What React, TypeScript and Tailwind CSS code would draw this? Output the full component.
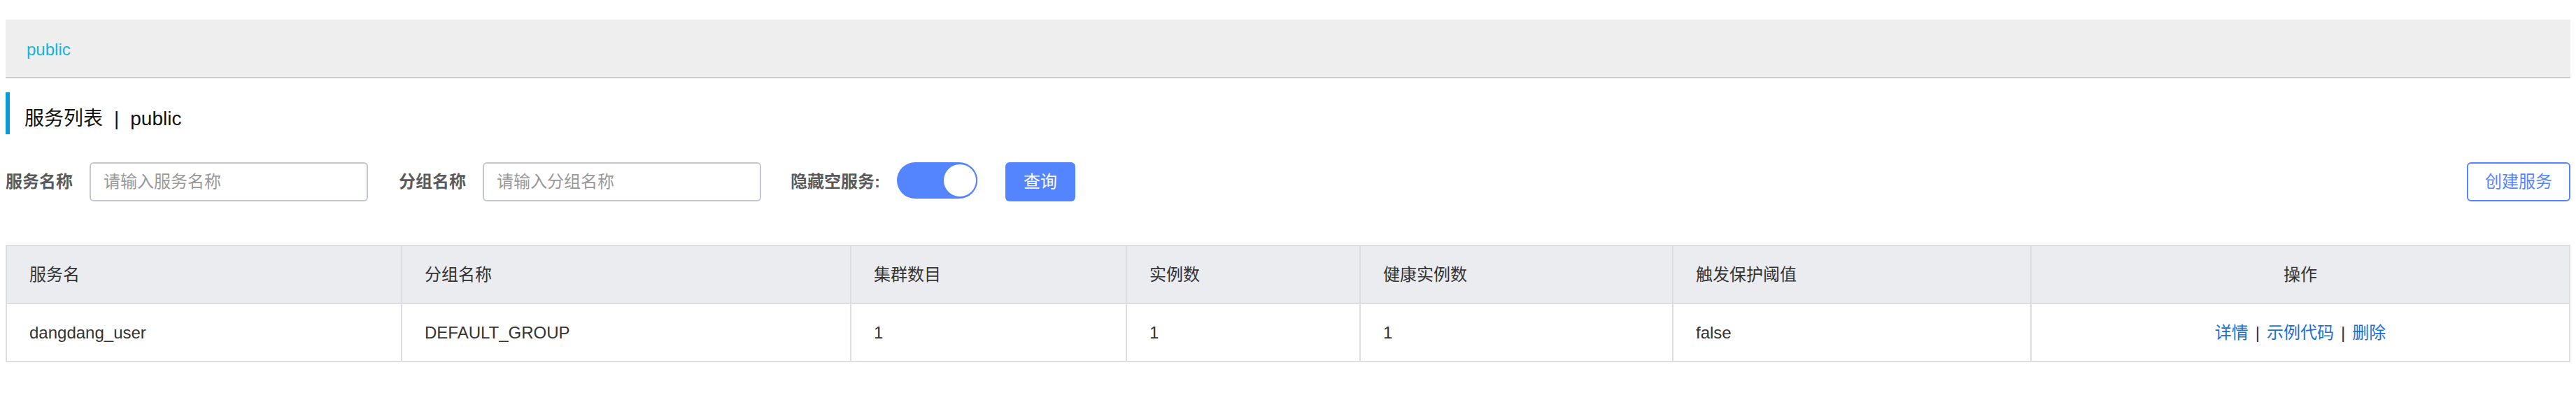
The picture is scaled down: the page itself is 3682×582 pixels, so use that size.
export default function App() {
  const grid =
    "grid grid-cols-[563px_642px_394px_334px_447px_512px_1fr]";
  const cell = "flex items-center px-[32px] border-l-2 border-[#dcdee3]";
  return (
    <div className="w-[3682px] h-[582px] bg-white pt-[28px] font-['Liberation_Sans','Noto_Sans_CJK_SC',sans-serif] text-[24px] text-[#333]">
      {/* namespace band */}
      <div className="mx-[8px] h-[84px] bg-[#eeeeee] border-b-2 border-[#cccccc] flex items-center pl-[30px] pt-[4px]">
        <span className="text-[#16b3d9] text-[24px] leading-[28px]">public</span>
      </div>

      {/* title */}
      <div className="mx-[8px] mt-[20px] h-[60px] border-l-[6px] border-[#0b9bd4] flex items-center pl-[21px] pt-[16px]">
        <span className="text-[28px] leading-[32px] text-[#111]">服务列表</span>
        <span className="text-[28px] leading-[32px] text-[#111] mx-[16px]">|</span>
        <span className="text-[28px] leading-[32px] text-[#111]">public</span>
      </div>

      {/* filter row */}
      <div className="mt-[40px] h-[56px] px-[8px] flex items-center">
        <span className="font-bold text-[#5a5a5a] mr-[24px] leading-[28px]">服务名称</span>
        <input
          readOnly
          placeholder="请输入服务名称"
          className="w-[398px] h-[56px] border-2 border-[#c4c6cf] rounded-[6px] pl-[18px] text-[24px] placeholder:text-[#999] outline-none"
        />
        <span className="ml-[44px] font-bold text-[#5a5a5a] mr-[24px] leading-[28px]">分组名称</span>
        <input
          readOnly
          placeholder="请输入分组名称"
          className="w-[398px] h-[56px] border-2 border-[#c4c6cf] rounded-[6px] pl-[18px] text-[24px] placeholder:text-[#999] outline-none"
        />
        <span className="ml-[42px] font-bold text-[#5a5a5a] mr-[24px] leading-[28px]">隐藏空服务:</span>
        <div className="relative w-[115px] h-[52px] rounded-full bg-[#5584ff] -mt-[4px]">
          <div className="absolute right-0 top-[1px] w-[50px] h-[50px] rounded-full bg-white border-2 border-[#5584ff]" />
        </div>
        <button className="ml-[40px] w-[100px] h-[56px] rounded-[6px] bg-[#5584ff] text-white text-[24px]">
          查询
        </button>
        <button className="ml-auto w-[148px] h-[56px] rounded-[6px] border-2 border-[#5584ff] bg-white text-[#5584ff] text-[24px]">
          创建服务
        </button>
      </div>

      {/* table */}
      <div className="mx-[8px] mt-[62px] border-2 border-[#dcdee3]">
        <div className={`${grid} h-[83px] bg-[#ebecf0] border-b-2 border-[#dcdee3]`}>
          <div className="flex items-center px-[32px]">服务名</div>
          <div className={cell}>分组名称</div>
          <div className={cell}>集群数目</div>
          <div className={cell}>实例数</div>
          <div className={cell}>健康实例数</div>
          <div className={cell}>触发保护阈值</div>
          <div className={`${cell} justify-center`}>操作</div>
        </div>
        <div className={`${grid} h-[81px] bg-white`}>
          <div className="flex items-center px-[32px]">dangdang_user</div>
          <div className={cell}>DEFAULT_GROUP</div>
          <div className={cell}>1</div>
          <div className={cell}>1</div>
          <div className={cell}>1</div>
          <div className={cell}>false</div>
          <div className={`${cell} justify-center`}>
            <span className="text-[#1d6fd9]">详情</span>
            <span className="mx-[10px] text-[#333]">|</span>
            <span className="text-[#1d6fd9]">示例代码</span>
            <span className="mx-[10px] text-[#333]">|</span>
            <span className="text-[#1d6fd9]">删除</span>
          </div>
        </div>
      </div>
    </div>
  );
}
